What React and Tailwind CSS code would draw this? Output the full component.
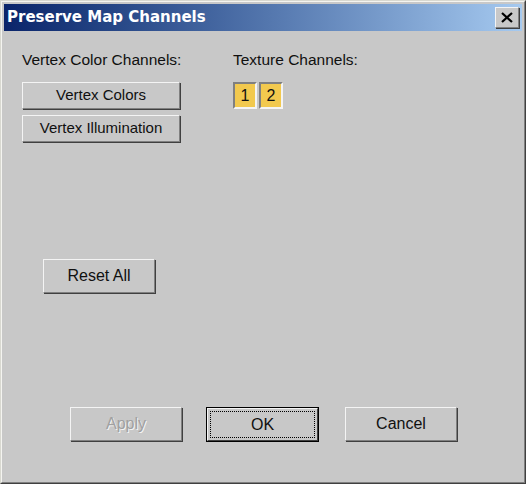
import React from 'react';

const font = { fontFamily: '"Liberation Sans", Arial, sans-serif' };

function Btn({ children, className = '', disabled = false }) {
  return (
    <div
      className={`flex items-center justify-center bg-[#c8c8c8] border border-t-[#f4f4f4] border-l-[#f4f4f4] border-b-[#808080] border-r-[#808080] shadow-[1px_1px_0_#404040] text-[15px] ${
        disabled ? 'text-[#a0a0a0] [text-shadow:1px_1px_0_#f4f4f4]' : 'text-[#101010]'
      } ${className}`}
    >
      {children}
    </div>
  );
}

function Channel({ n }) {
  return (
    <div className="w-[24px] h-[27px] flex items-center justify-center bg-[#f2c94e] border-2 border-t-[#808080] border-l-[#808080] border-b-[#f4f4f4] border-r-[#f4f4f4] text-[16px] text-[#101010]">
      {n}
    </div>
  );
}

export default function App() {
  return (
    <div style={font} className="w-[526px] h-[484px] bg-[#c8c8c8] border border-t-[#d8d8d0] border-l-[#d8d8d0] border-b-[#404040] border-r-[#404040]">
      <div className="h-full border border-t-[#f4f4f0] border-l-[#f4f4f0] border-b-[#808080] border-r-[#808080] p-[2px] flex flex-col">
        {/* title bar */}
        <div className="h-[27px] flex items-center justify-between pl-[3px] pr-[3px] bg-gradient-to-r from-[#0a246a] to-[#a6caf0]">
          <span
            className="text-white font-bold text-[15px]"
            style={{ fontFamily: '"DejaVu Sans", Verdana, sans-serif' }}
          >
            Preserve Map Channels
          </span>
          <div className="w-[24px] h-[21px] flex items-center justify-center bg-[#c8c8c8] border border-t-[#f4f4f4] border-l-[#f4f4f4] border-b-[#808080] border-r-[#808080] shadow-[1px_1px_0_#404040]">
            <svg width="12" height="11" viewBox="0 0 12 11">
              <path d="M1 1 L11 10 M11 1 L1 10" stroke="#000" strokeWidth="2.2" />
            </svg>
          </div>
        </div>

        {/* client */}
        <div className="flex-1 flex flex-col pl-[18px] pt-[20px]">
          <div className="flex">
            <div className="w-[211px] flex flex-col">
              <span className="text-[15.5px] text-[#101010] leading-[18px]">Vertex Color Channels:</span>
              <Btn className="mt-[13px] w-[158px] h-[27px]">Vertex Colors</Btn>
              <Btn className="mt-[6px] w-[158px] h-[27px]">Vertex Illumination</Btn>
            </div>
            <div className="flex flex-col">
              <span className="text-[15.5px] text-[#101010] leading-[18px]">Texture Channels:</span>
              <div className="mt-[13px] flex gap-[2px]">
                <Channel n="1" />
                <Channel n="2" />
              </div>
            </div>
          </div>

          <Btn className="ml-[21px] mt-[117px] w-[112px] h-[34px] text-[16px]">Reset All</Btn>

          <div className="mt-[114px] ml-[48px] flex">
            <Btn disabled className="w-[112px] h-[34px] text-[16px]">Apply</Btn>
            <div className="ml-[24px] w-[113px] h-[35px] border border-[#000] flex">
              <div className="flex-1 flex p-[2px] bg-[#c8c8c8] border border-t-[#f4f4f4] border-l-[#f4f4f4] border-b-[#404040] border-r-[#404040]">
                <div className="flex-1 flex items-center justify-center border border-dotted border-[#000] text-[16px] text-[#101010]">
                  OK
                </div>
              </div>
            </div>
            <Btn className="ml-[26px] w-[112px] h-[34px] text-[16px]">Cancel</Btn>
          </div>
        </div>
      </div>
    </div>
  );
}
